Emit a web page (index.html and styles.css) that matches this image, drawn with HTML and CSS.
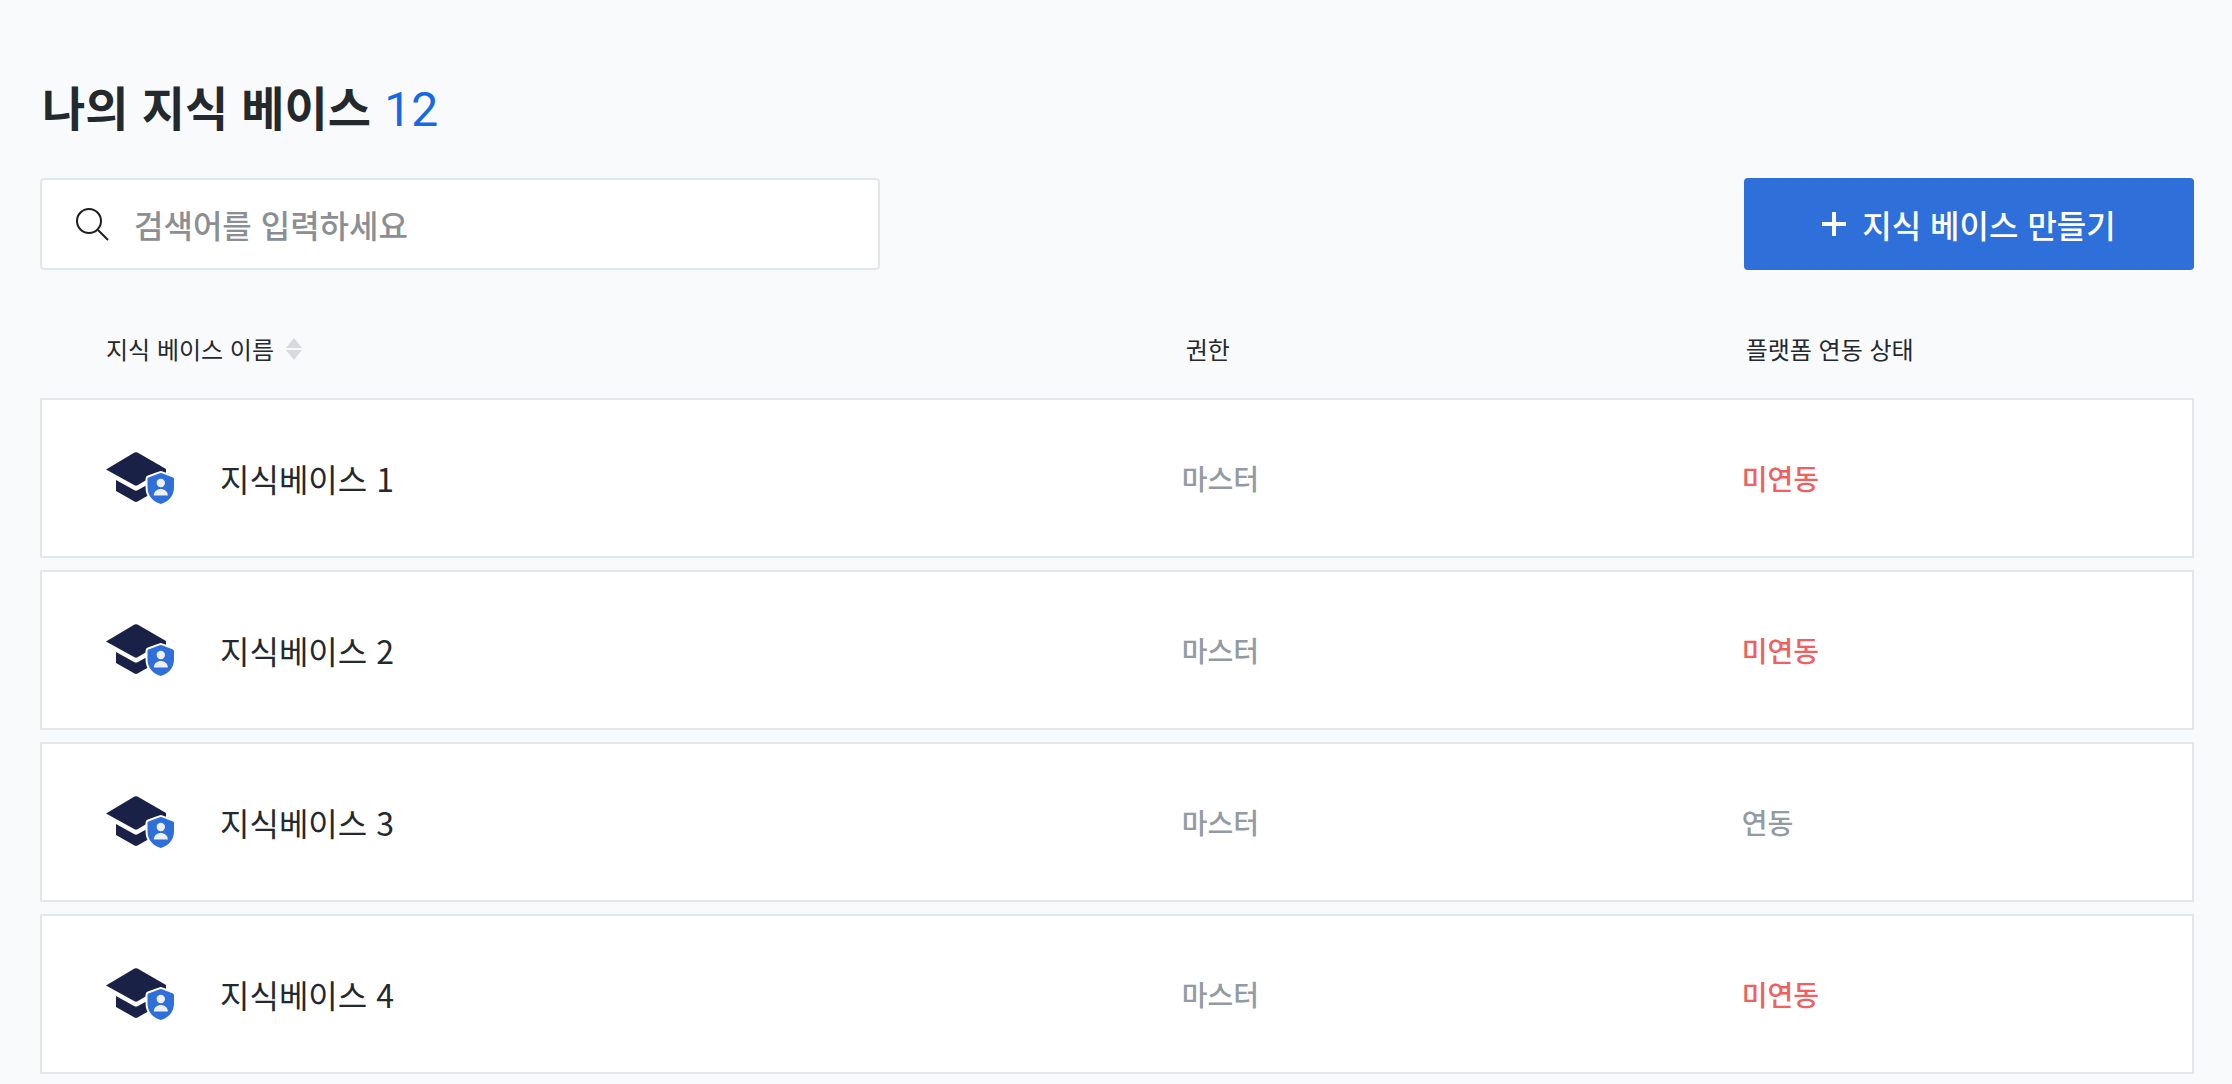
FILE: index.html
```html
<!DOCTYPE html>
<html lang="ko">
<head>
  <meta charset="UTF-8" />
  <meta name="viewport" content="width=device-width, initial-scale=1.0"/>
  <title>나의 지식 베이스</title>
  <link rel="stylesheet" href="styles.css">
</head>
<body>
  <!-- shared icon for every knowledge base row -->
  <svg class="sprite" aria-hidden="true">
    <symbol id="cap" viewBox="0 0 72 54">
      <path fill="#1a2146" d="M0 18.5 L28.5 1.6 Q30 .8 31.5 1.6 L60 18 V23 H50.5 L31.5 34.3 Q30 35.2 28.5 34.3 Z"/>
      <path fill="#1a2146" d="M10 29 L28.5 39.3 Q30 40.2 31.5 39.3 L50 29 V40 L31.5 50.6 Q30 51.4 28.5 50.6 L10 40 Z"/>
      <path fill="#2f6fda" stroke="#fff" stroke-width="4" paint-order="stroke" d="M53.6 22.3 Q54.8 21.8 56 22.3 L67 26.4 Q68 26.8 68 28 V36 C68 45.5 62 51 54.8 53 C47.5 51 41.5 45.5 41.5 36 V28 Q41.5 26.8 42.5 26.4 Z"/>
      <circle fill="#eceef0" cx="54.8" cy="32" r="4.2"/>
      <path fill="#eceef0" d="M47.8 44.5 C47.8 35.8 61.8 35.8 61.8 44.5 Z"/>
    </symbol>
  </svg>

  <h1>나의 지식 베이스 <span class="count">12</span></h1>

  <div class="toolbar">
    <label class="search">
      <svg class="search-icon" viewBox="0 0 34 34" aria-hidden="true">
        <circle cx="13" cy="14" r="12"/>
        <path d="M22 23 L32 33"/>
      </svg>
      <input type="text" placeholder="검색어를 입력하세요" aria-label="검색어">
    </label>
    <button type="button" class="create-button">
      <svg class="plus-icon" viewBox="0 0 24 24" aria-hidden="true">
        <path d="M12 0 V24 M0 12 H24"/>
      </svg>
      지식 베이스 만들기
    </button>
  </div>

  <table>
    <thead>
      <tr>
        <th class="col-name">
          <button type="button" class="sort-button">
            지식 베이스 이름
            <svg class="sort-icon" viewBox="0 0 16 22" aria-hidden="true">
              <path d="M8 0 L16 10 H0 Z M8 22 L16 12 H0 Z"/>
            </svg>
          </button>
        </th>
        <th class="col-role">권한</th>
        <th class="col-status">플랫폼 연동 상태</th>
      </tr>
    </thead>
    <tbody>
      <tr>
        <td><div class="name"><svg class="cap-icon" aria-hidden="true"><use href="#cap"/></svg>지식베이스 1</div></td>
        <td>마스터</td>
        <td class="unlinked">미연동</td>
      </tr>
      <tr>
        <td><div class="name"><svg class="cap-icon" aria-hidden="true"><use href="#cap"/></svg>지식베이스 2</div></td>
        <td>마스터</td>
        <td class="unlinked">미연동</td>
      </tr>
      <tr>
        <td><div class="name"><svg class="cap-icon" aria-hidden="true"><use href="#cap"/></svg>지식베이스 3</div></td>
        <td>마스터</td>
        <td>연동</td>
      </tr>
      <tr>
        <td><div class="name"><svg class="cap-icon" aria-hidden="true"><use href="#cap"/></svg>지식베이스 4</div></td>
        <td>마스터</td>
        <td class="unlinked">미연동</td>
      </tr>
    </tbody>
  </table>
</body>
</html>
```
FILE: styles.css
```css
* { box-sizing: border-box; }
body {
  margin: 0;
  padding: 78px 38px 0 40px;
  background: #f9fafc;
  color: #24292d;
  font-family: "Noto Sans CJK KR", sans-serif;
}
button, input { font-family: inherit; }
.sprite { display: none; }
h1 {
  margin: 0 0 44px;
  padding-left: 2px;
  font-size: 47px;
  line-height: 56px;
  font-weight: 700;
}
.count {
  color: #1668e3;
  font-family: Roboto, sans-serif;
  font-size: 48px;
  font-weight: 400;
  line-height: 1;
}
.toolbar {
  display: flex;
  justify-content: space-between;
  margin-bottom: 30px;
}
.search {
  display: flex;
  align-items: center;
  gap: 24px;
  width: 39%;
  height: 92px;
  padding: 0 34px;
  background: #fff;
  border: 2px solid #e4e7ea;
  border-radius: 4px;
}
.search-icon {
  flex: none;
  width: 34px;
  height: 34px;
  fill: none;
  stroke: #1c1e20;
  stroke-width: 2;
}
.search input {
  flex: 1;
  min-width: 0;
  padding: 0;
  border: none;
  outline: none;
  background: transparent;
  color: #24292d;
  font-size: 32px;
  font-weight: 500;
  line-height: 48px;
}
.search input::placeholder { color: #8b8f94; }
.create-button {
  display: flex;
  align-items: center;
  justify-content: center;
  gap: 16px;
  width: 450px;
  height: 92px;
  background: #2f6fda;
  color: #fff;
  border: none;
  border-radius: 4px;
  font-size: 32px;
  font-weight: 500;
  cursor: pointer;
}
.plus-icon {
  width: 24px;
  height: 24px;
  stroke: #fff;
  stroke-width: 4;
}
table {
  width: 100%;
  margin-bottom: -12px;
  border-collapse: separate;
  border-spacing: 0 12px;
  table-layout: fixed;
}
th {
  height: 74px;
  padding: 0 0 0 4px;
  text-align: left;
  font-size: 24px;
  line-height: 32px;
  font-weight: 400;
}
.col-name { width: 53%; padding-left: 66px; }
.col-role { width: 26%; }
.col-status { width: 21%; }
.sort-button {
  display: flex;
  align-items: center;
  gap: 12px;
  padding: 0;
  background: none;
  border: none;
  color: inherit;
  font-size: 24px;
  line-height: 32px;
  cursor: pointer;
}
.sort-icon {
  width: 16px;
  height: 22px;
  fill: #d6dadd;
}
td {
  height: 160px;
  padding: 0;
  background: #fff;
  border: solid #e4e7ea;
  border-width: 2px 0;
  color: #929ba3;
  font-size: 28px;
  font-weight: 500;
  line-height: 40px;
}
td:first-child { padding-left: 64px; border-left-width: 2px; }
td:last-child { border-right-width: 2px; }
.name {
  display: flex;
  align-items: center;
  gap: 42px;
  color: #24292d;
  font-size: 32px;
  font-weight: 400;
}
.cap-icon { width: 72px; height: 54px; }
td.unlinked { color: #f06060; }
```
